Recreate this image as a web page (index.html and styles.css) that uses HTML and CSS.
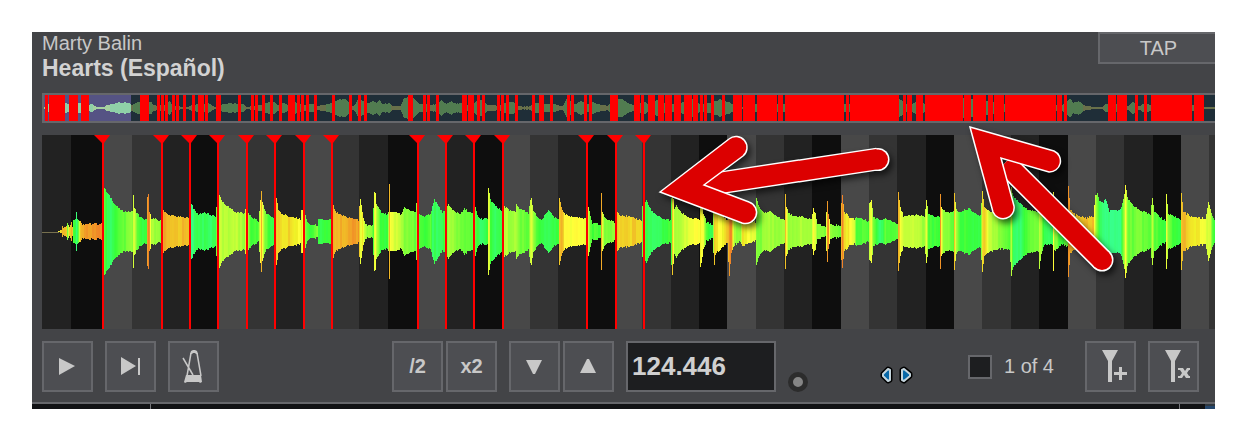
FILE: index.html
```html
<!DOCTYPE html>
<html lang="en">
<head>
    <meta charset="UTF-8">
    <meta name="viewport" content="width=device-width, initial-scale=1.0">
    <title>Beatgrid editor</title>
    <link rel="stylesheet" href="styles.css">
</head>
<body>
<main class="editor">
    <header class="track">
        <div class="track-info">
            <div class="artist">Marty Balin</div>
            <h1 class="title">Hearts (Español)</h1>
        </div>
        <button class="tap" type="button">TAP</button>
    </header>
    <div class="overview">
        <canvas id="overview" width="1171" height="26"></canvas>
    </div>
    <canvas class="wave" id="wave" width="1173" height="194"></canvas>
    <div class="toolbar">
        <div class="group transport">
            <button class="btn" type="button" aria-label="Play">
                <svg width="47" height="47" viewBox="0 0 47 47"><path d="M15 15L31 23L15 32Z"/></svg>
            </button>
            <button class="btn" type="button" aria-label="Next">
                <svg width="47" height="47" viewBox="0 0 47 47"><path d="M14 14L29 23L14 32ZM31 15h2v17h-2z"/></svg>
            </button>
            <button class="btn" type="button" aria-label="Metronome">
                <svg width="47" height="47" viewBox="0 0 47 47">
                    <path d="M16 32H31L32 39L30 40L29 39H17L15 40L14 39ZM20 11L21 8L23 7H25L27 8L28 11H26L25 10H23L22 11Z"/>
                    <path class="line" d="M21 10L17 33M27 10L31 33M13 15L23 32M18 25L21 28"/>
                </svg>
            </button>
        </div>
        <div class="group tempo">
            <div class="pair">
                <button class="btn" type="button">/2</button>
                <button class="btn" type="button">x2</button>
            </div>
            <div class="pair">
                <button class="btn" type="button" aria-label="Slower">
                    <svg width="47" height="47" viewBox="0 0 47 47"><path d="M15 17H31L24 31H22Z"/></svg>
                </button>
                <button class="btn" type="button" aria-label="Faster">
                    <svg width="47" height="47" viewBox="0 0 47 47"><path d="M15 30H31L24 16H22Z"/></svg>
                </button>
            </div>
            <input class="bpm" type="text" value="124.446" aria-label="BPM">
            <span class="led"></span>
        </div>
        <svg class="nudge" width="38" height="20" viewBox="0 0 38 20">
            <g class="nudge-edge">
                <path d="M10 4L12 5V15L10 16L5 11V9Z"/>
                <path d="M26 4L24 5V15L26 16L32 11V9Z"/>
            </g>
            <g class="nudge-fill">
                <path d="M10 4L12 5V15L10 16L5 11V9Z"/>
                <path d="M26 4L24 5V15L26 16L32 11V9Z"/>
            </g>
        </svg>
        <div class="group markers">
            <label class="count"><input class="check" type="checkbox">1 of 4</label>
            <button class="btn" type="button" aria-label="Add marker">
                <svg width="47" height="47" viewBox="0 0 47 47"><path d="M15 7H31L25 18V39H21V18ZM32 24h3v5h5v3h-5v5h-3v-5h-5v-3h5z"/></svg>
            </button>
            <button class="btn" type="button" aria-label="Delete marker">
                <svg width="47" height="47" viewBox="0 0 47 47"><path d="M15 7H31L25 18V39H21V18ZM28 25H33L35 28L37 25H40V27H39L37 30L39 33H40V35H36L34 32L32 35H28V33H30L32 30L30 27H28Z"/></svg>
            </button>
        </div>
    </div>
    <footer class="ruler">
        <span class="ruler-first"></span>
        <span class="ruler-last"></span>
        <span class="ruler-end"></span>
    </footer>
    <svg class="arrows" viewBox="0 0 1183 377">
        <g class="arrow">
            <path class="shaft-edge" d="M674 153L846 127"/>
            <circle class="cap-edge" cx="846" cy="127.500" r="11.500"/>
            <path class="shaft" d="M674 153L846 127"/>
            <circle class="cap" cx="846" cy="127.500" r="10"/>
            <path class="head" d="M628 160L697 107A11 11 0 0 1 711 124L672 153L717 170A11 11 0 0 1 710 191Z"/>
        </g>
        <g class="arrow">
            <path class="shaft-edge" d="M973 131L1070 228"/>
            <circle class="cap-edge" cx="1070" cy="228" r="11.500"/>
            <path class="shaft" d="M973 131L1070 228"/>
            <circle class="cap" cx="1070" cy="228" r="10"/>
            <path class="head" d="M938 95L1022 119A11 11 0 0 1 1017 140L969 126L982 174A11 11 0 0 1 961 180Z"/>
        </g>
    </svg>
</main>
<script src="waveform.js"></script>
</body>
</html>
```

FILE: styles.css
```css
* {
    box-sizing: border-box;
}
body {
    margin: 0;
    padding: 32px;
    background: #fff;
    font-family: Arial, "Liberation Sans", sans-serif;
    font-size: 20px;
    color: #c8c8c8;
}
.editor {
    position: relative;
    background: #434447;
}
.track {
    display: flex;
    justify-content: space-between;
    align-items: flex-start;
    height: 61px;
    padding-left: 10px;
}
.artist {
    line-height: 22px;
}
.title {
    margin: 0;
    font-size: 23px;
    line-height: 28px;
    color: #d2d2d2;
}
.tap {
    width: 117px;
    height: 32px;
    padding: 0 0 0 2px;
    border: 2px solid #66676b;
    border-right: 0;
    background: #4d4e52;
    font: inherit;
    color: inherit;
}
.overview {
    margin-left: 10px;
    border: 2px solid #66676b;
    border-right: 0;
    background: #1f2e38;
}
.overview canvas,
.wave {
    display: block;
    width: 100%;
}
.overview canvas {
    height: 26px;
}
.wave {
    width: calc(100% - 10px);
    height: 194px;
    margin: 12px 0 0 10px;
}
.toolbar {
    display: flex;
    padding: 12px 16px 10px 10px;
}
.group {
    display: flex;
    gap: 12px;
}
.pair {
    display: flex;
    gap: 3px;
}
.tempo {
    margin-left: 173px;
}
.btn {
    display: flex;
    align-items: center;
    justify-content: center;
    width: 51px;
    height: 51px;
    padding: 0;
    border: 2px solid #66676b;
    background: #4d4e52;
    font: bold 20px Arial, "Liberation Sans", sans-serif;
    color: #c8c8c8;
}
.btn svg {
    flex: none;
    fill: #c8c8c8;
}
.btn .line {
    fill: none;
    stroke: #c8c8c8;
    stroke-width: 1.5;
}
.bpm {
    width: 150px;
    height: 51px;
    padding: 0 4px;
    border: 2px solid #66676b;
    background: #1d1e20;
    font: bold 26px Arial, "Liberation Sans", sans-serif;
    color: #d0d0d0;
}
.led {
    align-self: flex-end;
    width: 20px;
    height: 20px;
    border: 5px solid #2c2c2c;
    border-radius: 50%;
    background: #858585;
}
.nudge {
    align-self: flex-end;
    margin: 0 0 7px 70px;
}
.nudge-edge {
    fill: #000;
    stroke: #000;
    stroke-width: 5;
    stroke-linejoin: round;
}
.nudge-fill {
    fill: #0868a8;
    stroke: #c4d4dc;
    stroke-width: 2;
    stroke-linejoin: round;
}
.markers {
    margin-left: auto;
}
.count {
    display: flex;
    align-items: center;
    gap: 12px;
    margin-right: 19px;
}
.check {
    appearance: none;
    width: 24px;
    height: 24px;
    margin: 0;
    border: 2px solid #66676b;
    background: #1d1e20;
}
.ruler {
    display: flex;
    height: 7px;
    padding-left: 118px;
    border-top: 2px solid #66676b;
    background: #111214;
}
.ruler-first,
.ruler-last {
    width: 1px;
    background: #77787c;
}
.ruler-last {
    margin: 0 25px 0 auto;
}
.ruler-end {
    width: 10px;
    background: linear-gradient(#303840 40%, #24466c 40%);
}
.arrows {
    position: absolute;
    top: 0;
    left: 0;
    width: 100%;
    overflow: visible;
    pointer-events: none;
}
.arrow {
    filter: drop-shadow(3px 4px 3px rgba(0, 0, 0, 0.6));
}
.shaft,
.shaft-edge {
    stroke: #dc0000;
    stroke-width: 20;
}
.shaft-edge {
    stroke: #fff;
    stroke-width: 23;
}
.cap,
.head {
    fill: #dc0000;
}
.cap-edge {
    fill: #fff;
}
.head {
    stroke: #fff;
    stroke-width: 1.5;
}
```

FILE: waveform.js
```js
// Beat shades: start x and grey level
const beats = [
    [0, 34], [29, 14], [61, 72], [90, 52], [120, 34], [148, 14], [175, 72], [204, 52],
    [233, 34], [262, 72], [290, 52], [317, 34], [346, 14], [375, 72], [404, 34], [432, 14],
    [461, 72], [488, 52], [516, 34], [545, 14], [574, 72], [600, 52], [629, 34], [657, 14],
    [685, 72], [714, 52], [742, 34], [770, 14], [799, 72], [827, 52], [855, 34], [884, 14],
    [912, 72], [940, 52], [969, 34], [997, 14], [1026, 72], [1054, 52], [1082, 34],
    [1111, 14], [1139, 72], [1167, 52]
];

const cues = [60, 119, 147, 175, 204, 232, 261, 289, 375, 403, 431, 460, 544, 573, 601];

// Track position, peak height, hue. Positions count from 42.
const peaks = [
    [58, 1, 60], [61, 3, 45], [62, 5, 40], [66, 6, 50], [67, 10, 100], [69, 5, 55], [71, 10, 40],
    [72, 6, 42], [73, 13, 110], [75, 13, 120], [76, 21, 140], [77, 13, 130], [80, 11, 45],
    [82, 8, 36], [101, 8, 32],
    [104, 44, 105], [107, 39, 130], [110, 35, 132], [114, 28, 125], [118, 24, 115], [122, 21, 110],
    [128, 20, 100], [132, 20, 95], [133, 38, 72], [134, 24, 75], [137, 18, 110], [142, 13, 125],
    [146, 12, 125], [147, 34, 40], [148, 38, 30], [149, 20, 35], [151, 14, 85], [161, 11, 100],
    [163, 22, 38], [165, 20, 42], [168, 17, 48], [180, 15, 45], [189, 14, 42],
    [191, 29, 140], [193, 24, 135], [197, 18, 130], [204, 19, 130], [210, 17, 135], [215, 16, 125],
    [216, 24, 100], [219, 37, 75], [222, 30, 82], [228, 25, 85], [235, 20, 75], [244, 19, 90],
    [245, 23, 55], [249, 17, 110], [252, 14, 120], [258, 11, 110], [260, 32, 60], [261, 42, 42],
    [262, 30, 60], [264, 22, 90], [267, 18, 115], [273, 14, 130],
    [276, 34, 45], [278, 22, 52], [282, 18, 55], [290, 15, 52], [300, 13, 62], [301, 22, 55],
    [305, 17, 100], [307, 10, 110], [309, 7, 120], [317, 7, 100], [318, 12, 125], [331, 12, 120],
    [333, 26, 38], [335, 20, 42], [340, 17, 43], [350, 14, 36], [358, 12, 34],
    [359, 26, 50], [360, 33, 62], [362, 20, 58], [364, 10, 75], [368, 6, 95], [372, 6, 100],
    [373, 24, 110], [374, 40, 65], [375, 38, 60], [376, 28, 80], [380, 21, 120], [387, 17, 125],
    [388, 20, 80], [389, 47, 38], [390, 20, 60], [393, 21, 70], [400, 18, 80], [401, 18, 85],
    [404, 25, 100], [408, 22, 95], [415, 20, 105], [416, 28, 90],
    [419, 18, 115], [423, 16, 120], [430, 17, 110], [432, 27, 130], [434, 33, 130], [438, 26, 132],
    [442, 20, 130], [445, 21, 110], [448, 28, 85], [452, 22, 92], [460, 18, 100], [464, 23, 105],
    [472, 18, 110], [475, 24, 110], [477, 17, 120], [480, 13, 135], [487, 13, 125], [488, 44, 70],
    [489, 38, 75], [490, 32, 120], [495, 26, 130], [501, 21, 122],
    [504, 26, 78], [508, 22, 88], [515, 20, 85], [516, 28, 90], [520, 23, 105], [528, 19, 105],
    [530, 32, 75], [531, 33, 70], [533, 22, 95], [536, 16, 110], [541, 12, 125], [545, 18, 130],
    [549, 22, 130], [552, 16, 125], [558, 13, 120], [559, 33, 50], [561, 25, 42], [564, 18, 60],
    [572, 15, 60], [585, 14, 62], [588, 25, 75], [590, 15, 110], [592, 9, 115], [600, 7, 115],
    [601, 39, 42], [602, 20, 70], [604, 15, 95], [608, 12, 100], [614, 10, 95],
    [617, 20, 45], [620, 17, 50], [630, 15, 50], [641, 12, 48], [642, 25, 100], [645, 30, 110],
    [646, 32, 125], [648, 27, 130], [652, 20, 132], [658, 15, 130], [664, 13, 122], [670, 12, 115],
    [671, 33, 110], [672, 45, 50], [674, 22, 80], [676, 27, 85], [680, 20, 80], [690, 14, 65],
    [699, 13, 60], [700, 35, 58], [701, 32, 60], [703, 18, 65], [706, 10, 110], [710, 8, 130],
    [712, 7, 125], [714, 35, 45], [715, 24, 50], [716, 22, 58], [720, 18, 62], [727, 12, 50],
    [728, 30, 40], [729, 45, 30], [731, 22, 33], [734, 14, 90], [740, 10, 90], [742, 15, 55],
    [755, 10, 70], [756, 35, 90], [758, 27, 100], [762, 20, 95], [770, 20, 88], [780, 14, 90],
    [784, 12, 90], [785, 38, 48], [786, 26, 60], [788, 20, 95], [793, 15, 90], [800, 16, 85],
    [811, 12, 88], [813, 24, 62], [815, 18, 68], [817, 8, 95], [825, 6, 100], [827, 32, 30],
    [828, 18, 32], [830, 8, 90], [840, 6, 105], [841, 30, 42], [842, 37, 28], [844, 20, 55],
    [850, 14, 62], [854, 13, 70], [856, 15, 110], [868, 11, 115], [869, 30, 75], [871, 32, 68],
    [873, 15, 100], [880, 12, 140], [885, 14, 110], [897, 8, 110], [898, 41, 45], [900, 25, 60],
    [903, 16, 75], [915, 17, 78], [924, 15, 90], [926, 33, 65], [928, 18, 110], [933, 16, 120],
    [939, 15, 118], [940, 38, 30], [941, 24, 60], [943, 22, 90], [948, 19, 95], [953, 20, 110],
    [954, 39, 45], [956, 22, 90], [960, 20, 120], [969, 24, 118], [975, 18, 125], [980, 17, 120],
    [982, 40, 58], [984, 25, 48], [990, 20, 78], [1000, 18, 95], [1009, 19, 115], [1011, 44, 85],
    [1013, 36, 130], [1020, 28, 135], [1028, 22, 105], [1038, 20, 105], [1039, 38, 85],
    [1041, 22, 90], [1044, 14, 130], [1052, 13, 130], [1053, 40, 60], [1054, 20, 90],
    [1060, 14, 120], [1067, 15, 110], [1068, 46, 30], [1070, 22, 35], [1075, 17, 50],
    [1085, 14, 48], [1093, 16, 45], [1095, 36, 80], [1097, 38, 100], [1099, 32, 130],
    [1103, 28, 135], [1105, 34, 140], [1109, 21, 145], [1120, 22, 140], [1124, 38, 85],
    [1125, 48, 60], [1127, 34, 100], [1132, 28, 105], [1138, 22, 100], [1150, 18, 110],
    [1152, 35, 80], [1154, 20, 110], [1165, 11, 125], [1166, 38, 70], [1168, 18, 100],
    [1174, 15, 120], [1180, 13, 120], [1181, 40, 45], [1183, 20, 42], [1190, 16, 52],
    [1205, 13, 65], [1208, 30, 72], [1210, 24, 75], [1212, 15, 110], [1215, 11, 130]
];

// Whole track: position, half height
const outline = [
    [44, 1], [47, 4], [66, 5], [68, 4], [79, 5], [89, 3], [92, 4], [94, 2], [104, 1], [106, 3],
    [112, 4], [118, 6], [129, 5], [132, 3], [137, 6], [151, 6], [153, 3], [157, 2], [165, 4],
    [169, 7], [173, 2], [180, 1], [188, 1], [190, 2], [196, 4], [208, 5], [214, 1], [222, 4],
    [228, 5], [236, 4], [242, 4], [246, 1], [252, 2], [260, 3], [266, 5], [272, 7], [277, 3],
    [283, 5], [288, 2], [295, 6], [298, 3], [310, 4], [317, 2], [331, 5], [336, 7], [340, 9],
    [346, 8], [352, 2], [355, 4], [358, 9], [367, 5], [372, 7], [376, 5], [379, 8], [382, 4],
    [388, 5], [393, 2], [400, 2], [403, 9], [407, 11], [413, 10], [419, 4], [426, 4], [432, 3],
    [438, 5], [441, 8], [446, 4], [451, 7], [456, 4], [460, 5], [468, 3], [475, 6], [480, 8],
    [488, 3], [497, 2], [505, 5], [512, 6], [519, 2], [528, 1], [534, 5], [545, 4], [553, 4],
    [562, 2], [566, 9], [570, 7], [575, 4], [580, 7], [587, 4], [592, 6], [598, 4], [607, 2],
    [610, 5], [618, 9], [622, 9], [627, 5], [632, 3], [644, 6], [648, 4], [657, 8], [665, 4],
    [681, 5], [693, 9], [699, 4], [710, 5], [716, 7], [719, 9], [724, 8], [727, 6], [733, 4],
    [742, 1], [756, 4], [784, 4], [845, 4], [899, 9], [907, 3], [916, 6], [925, 4], [963, 10],
    [972, 9], [986, 7], [1004, 4], [1062, 3], [1067, 7], [1070, 9], [1073, 5], [1078, 7],
    [1084, 3], [1092, 1], [1102, 1], [1105, 4], [1116, 4], [1128, 2], [1132, 6], [1139, 2],
    [1145, 5], [1151, 2], [1192, 3], [1204, 1], [1215, 1]
];

const hits = [
    [45, 48], [49, 65], [69, 78], [81, 89], [140, 149], [157, 160], [161, 164], [165, 168],
    [172, 175], [176, 179], [183, 186], [192, 195], [198, 204], [205, 208], [216, 221],
    [238, 241], [251, 254], [255, 258], [262, 265], [270, 273], [279, 282], [288, 295],
    [297, 300], [301, 304], [306, 309], [314, 317], [332, 335], [349, 352], [358, 361],
    [364, 367], [408, 413], [423, 426], [427, 430], [436, 439], [462, 467], [468, 474],
    [477, 480], [482, 485], [497, 500], [501, 504], [506, 509], [515, 518], [532, 535],
    [539, 544], [550, 553], [567, 570], [571, 574], [584, 587], [589, 592], [610, 618],
    [634, 640], [641, 644], [648, 655], [658, 664], [665, 672], [674, 681], [684, 692],
    [693, 698], [700, 703], [704, 707], [711, 714], [722, 725], [733, 742], [743, 755],
    [757, 777], [778, 783], [785, 844], [846, 849], [850, 899], [903, 906], [907, 912],
    [916, 923], [925, 963], [964, 971], [973, 986], [988, 993], [994, 1004], [1005, 1056],
    [1057, 1062], [1064, 1067], [1108, 1116], [1117, 1127], [1135, 1138], [1144, 1147],
    [1151, 1192], [1194, 1204]
];

function sample(points, x) {
    let i = 1;
    while (i < points.length - 1 && points[i][0] < x) i++;
    const a = points[i - 1];
    const b = points[i];
    const t = (x - a[0]) / (b[0] - a[0]);
    return a.map((v, k) => v + (b[k] - v) * t);
}

// small repeatable variation from one column to the next
function ripple(x) {
    const n = Math.sin(x * 12.9898) * 43758.5453;
    return n - Math.floor(n) - 0.5;
}

function drawWave() {
    const ctx = document.getElementById('wave').getContext('2d');
    beats.forEach(([x, grey]) => {
        ctx.fillStyle = `rgb(${grey}, ${grey}, ${grey})`;
        ctx.fillRect(x, 0, 1173 - x, 194);
    });
    ctx.fillStyle = '#77704f';
    ctx.fillRect(0, 97, 17, 1);

    for (let x = 58; x < 1215; x++) {
        const [, height, hue] = sample(peaks, x);
        const half = Math.max(1, Math.round(height + ripple(x) * 2));
        const shade = hue + ripple(Math.floor(x / 2)) * 10;
        const light = hue < 60 ? 55 : 61;
        ctx.fillStyle = `hsl(${shade}, ${hue < 60 ? 88 : 100}%, ${light}%)`;
        ctx.fillRect(x - 42, 97 - half, 1, half * 2 - 1);
    }

    ctx.fillStyle = '#f00';
    cues.forEach(x => {
        ctx.fillRect(x, 0, 2, 194);
        ctx.beginPath();
        ctx.moveTo(x - 8, 0);
        ctx.lineTo(x + 8, 0);
        ctx.lineTo(x + 2, 8);
        ctx.lineTo(x, 8);
        ctx.fill();
    });
}

function drawOverview() {
    const ctx = document.getElementById('overview').getContext('2d');
    ctx.fillStyle = '#555384';
    ctx.fillRect(0, 0, 87, 26);
    for (let x = 44; x < 1215; x++) {
        const half = Math.max(1, Math.round(sample(outline, x)[1] + ripple(Math.floor(x / 2))));
        if (x < 131) {
            ctx.fillStyle = half > 3 ? '#8fd0a8' : '#a5d0a0';
        } else {
            ctx.fillStyle = half > 3 ? '#517c50' : '#68704a';
        }
        ctx.fillRect(x - 44, 13 - half, 1, half * 2);
    }
    ctx.fillStyle = '#f00';
    hits.forEach(([from, to]) => ctx.fillRect(from - 44, 0, to - from, 26));
}

drawWave();
drawOverview();
```
